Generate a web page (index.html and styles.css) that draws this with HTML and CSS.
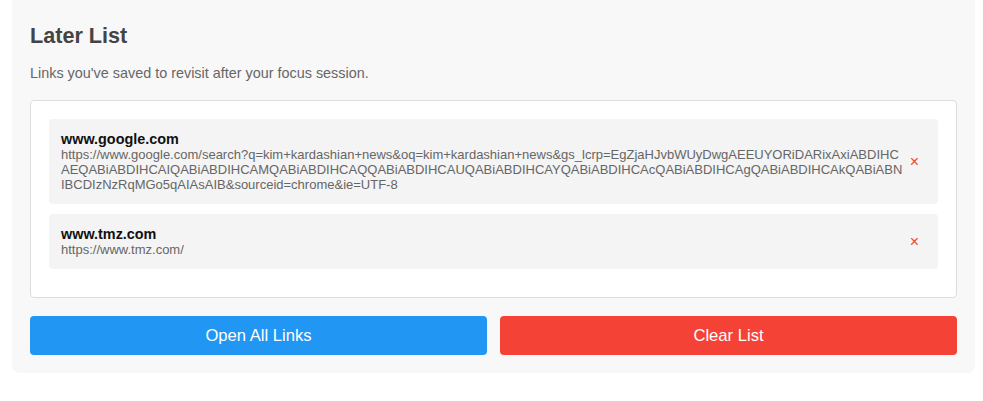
FILE: index.html
```html
<!DOCTYPE html>
<html lang="en">
<head>
<meta charset="utf-8">
<title>Later List</title>
<link rel="stylesheet" href="styles.css">
</head>
<body>
<div class="wrap">
  <section class="card">
    <h2 class="title">Later List</h2>
    <p class="subtitle">Links you've saved to revisit after your focus session.</p>
    <div class="list">
      <div class="item">
        <div class="info">
          <div class="host">www.google.com</div>
          <div class="url">https://www.google.com/search?q=kim+kardashian+news&amp;oq=kim+kardashian+news&amp;gs_lcrp=EgZjaHJvbWUyDwgAEEUYORiDARixAxiABDIHCAEQABiABDIHCAIQABiABDIHCAMQABiABDIHCAQQABiABDIHCAUQABiABDIHCAYQABiABDIHCAcQABiABDIHCAgQABiABDIHCAkQABiABNIBCDIzNzRqMGo5qAIAsAIB&amp;sourceid=chrome&amp;ie=UTF-8</div>
        </div>
        <button class="remove" type="button">×</button>
      </div>
      <div class="item">
        <div class="info">
          <div class="host">www.tmz.com</div>
          <div class="url">https://www.tmz.com/</div>
        </div>
        <button class="remove" type="button">×</button>
      </div>
    </div>
    <div class="actions">
      <button class="btn btn-open" type="button">Open All Links</button>
      <button class="btn btn-clear" type="button">Clear List</button>
    </div>
  </section>
</div>
</body>
</html>
```

FILE: styles.css
```css
html, body {
  margin: 0;
  padding: 0;
  background: #ffffff;
  font-family: "Liberation Sans", Arial, sans-serif;
}

.wrap {
  padding: 0 8px 0 12px;
}

.card {
  background: #f8f8f8;
  border-radius: 0 0 8px 8px;
  padding: 23px 18px 18px;
}

.title {
  margin: 0 0 17px;
  font-size: 21.6px;
  font-weight: bold;
  color: #444444;
  line-height: 25px;
}

.subtitle {
  margin: 0 0 19px;
  font-size: 14.4px;
  line-height: 16px;
  color: #666666;
}

.list {
  background: #ffffff;
  border: 1px solid #dddddd;
  border-radius: 4px;
  padding: 18px;
}

.item {
  display: flex;
  align-items: center;
  gap: 2px;
  background: #f4f4f4;
  border-radius: 4px;
  padding: 12px 14px 12px 12px;
  margin-bottom: 10px;
}

.info {
  flex: 1;
  min-width: 0;
}

.host {
  font-size: 14.4px;
  font-weight: bold;
  color: #111111;
  line-height: 16px;
}

.url {
  font-size: 13px;
  line-height: 15px;
  color: #666666;
  word-break: break-all;
}

.remove {
  border: 0;
  background: transparent;
  color: #f44336;
  font-family: "Liberation Sans", Arial, sans-serif;
  font-size: 16px;
  line-height: 16px;
  padding: 0 5px;
  cursor: pointer;
}

.actions {
  display: flex;
  gap: 13px;
  margin-top: 18px;
}

.btn {
  flex: 1;
  height: 39px;
  border: 0;
  border-radius: 4px;
  color: #ffffff;
  font-family: "Liberation Sans", Arial, sans-serif;
  font-size: 16.6px;
  cursor: pointer;
}

.btn-open {
  background: #2196f3;
}

.btn-clear {
  background: #f44336;
}
```
